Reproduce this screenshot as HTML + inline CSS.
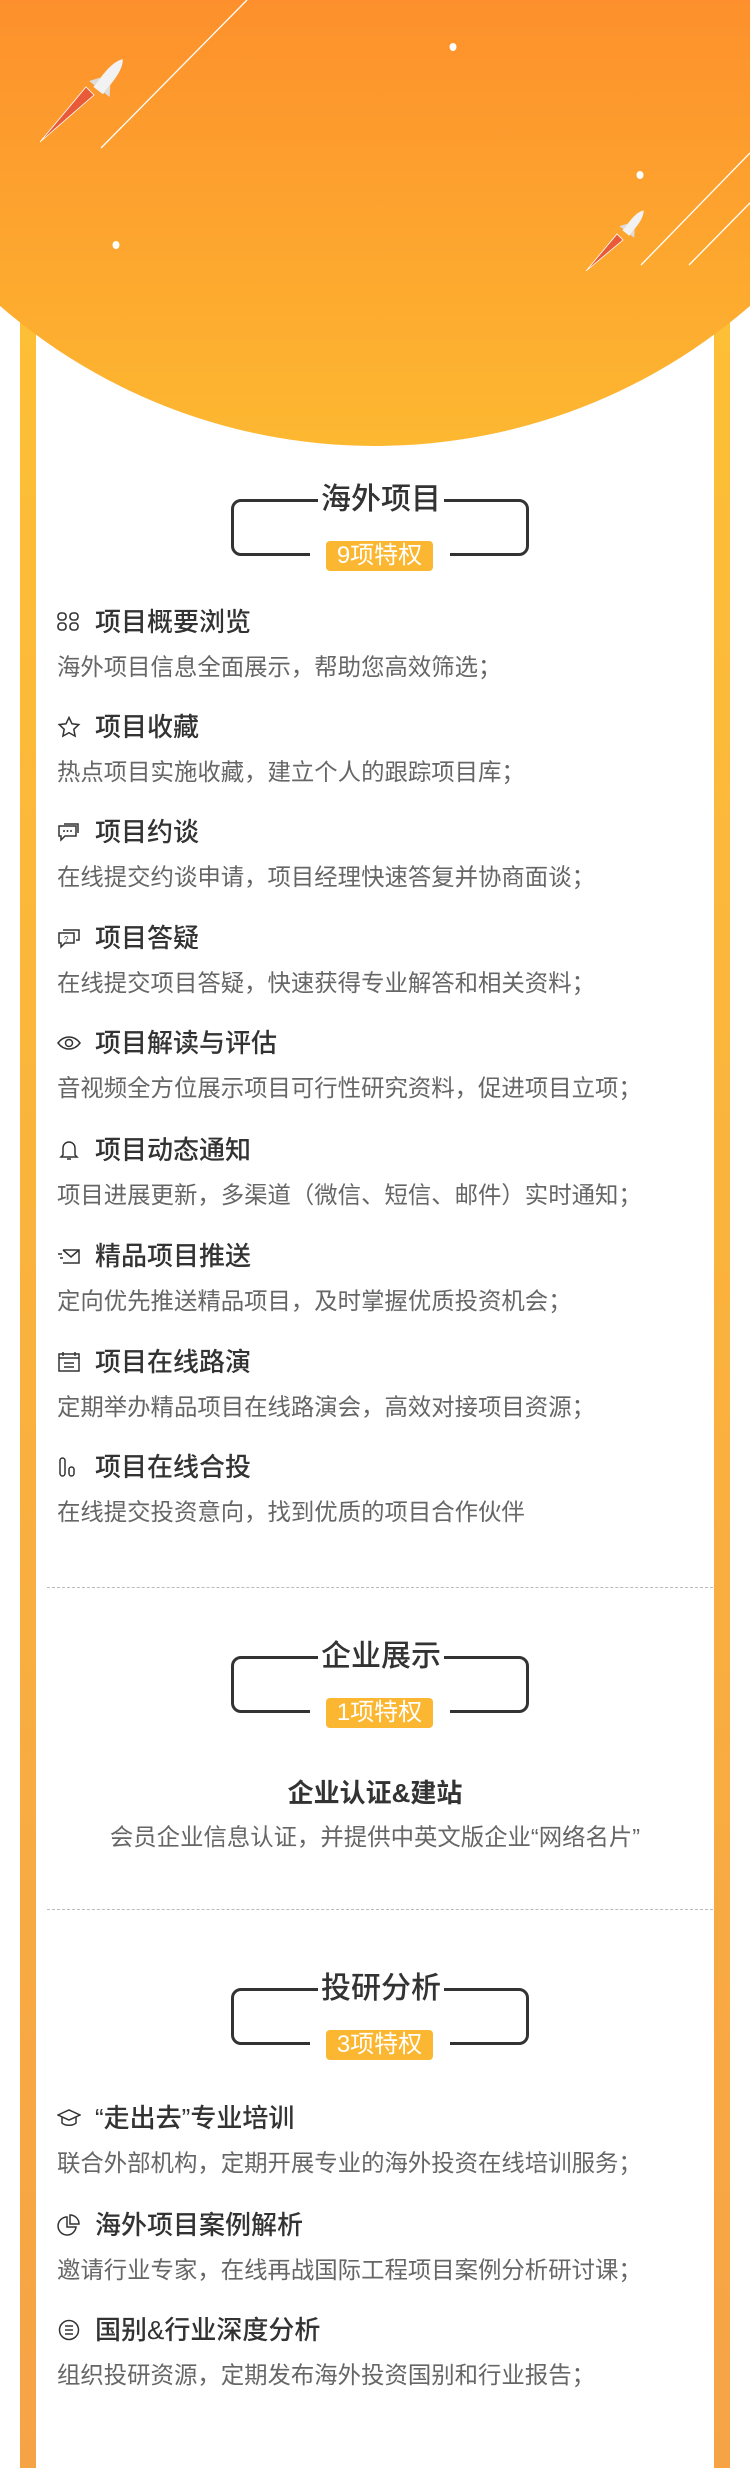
<!DOCTYPE html>
<html><head><meta charset="utf-8"><style>
*{margin:0;padding:0;box-sizing:border-box}
body{width:750px;height:2468px;position:relative;background:#fff;overflow:hidden;font-family:"Liberation Sans","Noto Sans CJK SC",sans-serif}
.bar{position:absolute;top:320px;bottom:0;width:16px;background:linear-gradient(#fdbf36,#f6a346)}
.circle{position:absolute;left:-197px;top:-698px;width:1144px;height:1144px;border-radius:50%;background:linear-gradient(to bottom,#fd8a2b 55%,#fdb831 100%)}
.hd{position:absolute;left:231px;width:298px;height:57px;border:3px solid #333;border-radius:10px}
.hd .t{position:absolute;left:84px;width:126px;top:-22px;height:40px;background:#fff;text-align:center;font-size:30px;font-weight:500;color:#333;line-height:40px}
.hd .bw{position:absolute;left:76px;width:140px;bottom:-18px;height:32px;background:#fff}
.hd .b{position:absolute;left:92px;width:107px;bottom:-18px;height:30px;background:#fbb731;border-radius:4px;color:#fff;font-size:24px;line-height:30px;text-align:center}
.it{position:absolute;left:57px;width:660px}
.it .ti{position:absolute;left:38px;top:-16px;font-size:26px;font-weight:500;color:#333;line-height:32px;white-space:nowrap}
.it svg{position:absolute;left:0;top:-11px;width:24px;height:22px}
.it .d{position:absolute;left:0;top:30px;font-size:23.4px;color:#666;line-height:30px;white-space:nowrap}
.dash{position:absolute;left:47px;width:666px;border-top:1.5px dashed #bbb}
</style></head><body>
<div class="bar" style="left:20px"></div>
<div class="bar" style="left:714px"></div>
<div class="circle"></div>
<svg style="position:absolute;left:0;top:0" width="750" height="460">
<g stroke="#fff" stroke-width="1.3"><line x1="247" y1="0" x2="101" y2="148"/><line x1="750" y1="153" x2="641" y2="265"/><line x1="750" y1="203" x2="689" y2="265"/></g>
<g fill="#fff"><ellipse cx="453" cy="47" rx="3.5" ry="4"/><ellipse cx="640" cy="175" rx="3.5" ry="4"/><ellipse cx="116" cy="245" rx="3.5" ry="4"/></g>
<path d="M40 142 L86 87 L94 95 Z" fill="#e85a38" stroke="#fff" stroke-width="0.8"/>
<g transform="translate(108,78) rotate(38)"><path d="M0 -24 C5 -18 6 -8 6 0 L6 16 L-6 16 L-6 0 C-6 -8 -5 -18 0 -24Z" fill="#f2f2f2"/><path d="M-6 4 L-13 14 L-6 14Z M6 4 L13 14 L6 14Z" fill="#ddd"/></g>
<path d="M586 271 L617 234 L623 240 Z" fill="#e85a38" stroke="#fff" stroke-width="0.8"/>
<g transform="translate(633,224) rotate(38) scale(0.72)"><path d="M0 -24 C5 -18 6 -8 6 0 L6 16 L-6 16 L-6 0 C-6 -8 -5 -18 0 -24Z" fill="#f2f2f2"/><path d="M-6 4 L-13 14 L-6 14Z M6 4 L13 14 L6 14Z" fill="#ddd"/></g>
</svg>

<div class="hd" style="top:499px"><div class="t">海外项目</div><div class="bw"></div><div class="b">9项特权</div></div>

<div class="it" style="top:622px"><svg viewBox="0 0 24 22" fill="none" stroke="#333" stroke-width="1.6"><rect x="1" y="2" width="8" height="7" rx="3"/><rect x="13" y="2" width="8" height="7" rx="3"/><rect x="1" y="12" width="8" height="7" rx="3"/><rect x="13" y="12" width="8" height="7" rx="3"/></svg><div class="ti">项目概要浏览</div><div class="d">海外项目信息全面展示，帮助您高效筛选；</div></div>
<div class="it" style="top:727px"><svg viewBox="0 0 24 22" fill="none" stroke="#333" stroke-width="1.5"><path d="M12 1.5l3 6.3 6.8.8-5 4.7 1.3 6.8L12 16.7 5.9 20.1l1.3-6.8-5-4.7 6.8-.8z"/></svg><div class="ti">项目收藏</div><div class="d">热点项目实施收藏，建立个人的跟踪项目库；</div></div>
<div class="it" style="top:832px"><svg viewBox="0 0 24 22" fill="none" stroke="#333" stroke-width="1.5"><path d="M2 5h17v10H8l-4 4v-4H2z"/><path d="M7 3h14v9"/><g fill="#333" stroke="none"><circle cx="7" cy="10" r="1"/><circle cx="10.5" cy="10" r="1"/><circle cx="14" cy="10" r="1"/></g></svg><div class="ti">项目约谈</div><div class="d">在线提交约谈申请，项目经理快速答复并协商面谈；</div></div>
<div class="it" style="top:938px"><svg viewBox="0 0 24 22" fill="none" stroke="#333" stroke-width="1.5"><path d="M2 6h15v10H8l-4 4v-4H2z"/><path d="M6 3h16v10h-3"/><text x="7" y="15" font-size="8" fill="#333" stroke="none" font-family="Liberation Sans">?</text></svg><div class="ti">项目答疑</div><div class="d">在线提交项目答疑，快速获得专业解答和相关资料；</div></div>
<div class="it" style="top:1043px"><svg viewBox="0 0 24 22" fill="none" stroke="#333" stroke-width="1.5"><path d="M1 11c6-8 16-8 22 0-6 8-16 8-22 0z"/><circle cx="12" cy="11" r="3.5"/></svg><div class="ti">项目解读与评估</div><div class="d">音视频全方位展示项目可行性研究资料，促进项目立项；</div></div>
<div class="it" style="top:1150px"><svg viewBox="0 0 24 22" fill="none" stroke="#333" stroke-width="1.5"><path d="M6 16V9a6 6 0 0 1 12 0v7l2 2H4z"/><path d="M10 20h4"/></svg><div class="ti">项目动态通知</div><div class="d">项目进展更新，多渠道（微信、短信、邮件）实时通知；</div></div>
<div class="it" style="top:1256px"><svg viewBox="0 0 24 22" fill="none" stroke="#333" stroke-width="1.5"><path d="M6 5h16v13H6"/><path d="M6 5l8 7 8-7"/><path d="M1 9h4M3 13h3"/></svg><div class="ti">精品项目推送</div><div class="d">定向优先推送精品项目，及时掌握优质投资机会；</div></div>
<div class="it" style="top:1362px"><svg viewBox="0 0 24 22" fill="none" stroke="#333" stroke-width="1.5"><rect x="2" y="3" width="20" height="17"/><path d="M2 7h20M6 1v4M18 1v4M7 12h10M7 16h10"/></svg><div class="ti">项目在线路演</div><div class="d">定期举办精品项目在线路演会，高效对接项目资源；</div></div>
<div class="it" style="top:1467px"><svg viewBox="0 0 24 22" fill="none" stroke="#333" stroke-width="1.5"><rect x="3" y="2" width="5" height="18" rx="2.5"/><rect x="12" y="11" width="5" height="9" rx="2.5"/></svg><div class="ti">项目在线合投</div><div class="d">在线提交投资意向，找到优质的项目合作伙伴</div></div>

<div class="dash" style="top:1587px"></div>
<div class="hd" style="top:1656px"><div class="t">企业展示</div><div class="bw"></div><div class="b">1项特权</div></div>
<div style="position:absolute;left:0;width:750px;top:1777px;text-align:center;font-size:26px;font-weight:bold;color:#333;line-height:32px">企业认证&amp;建站</div>
<div style="position:absolute;left:0;width:750px;top:1822px;text-align:center;font-size:23.4px;color:#666;line-height:30px">会员企业信息认证，并提供中英文版企业“网络名片”</div>
<div class="dash" style="top:1909px"></div>
<div class="hd" style="top:1988px"><div class="t">投研分析</div><div class="bw"></div><div class="b">3项特权</div></div>

<div class="it" style="top:2118px"><svg viewBox="0 0 24 22" fill="none" stroke="#333" stroke-width="1.5"><path d="M1 8l11-5 11 5-11 5z"/><path d="M5 10v6c3 3 11 3 14 0v-6"/></svg><div class="ti">“走出去”专业培训</div><div class="d">联合外部机构，定期开展专业的海外投资在线培训服务；</div></div>
<div class="it" style="top:2225px"><svg viewBox="0 0 24 22" fill="none" stroke="#333" stroke-width="1.5"><path d="M10 3a9 9 0 1 0 9 10h-9z"/><path d="M13 1v9h9a9 9 0 0 0-9-9z"/></svg><div class="ti">海外项目案例解析</div><div class="d">邀请行业专家，在线再战国际工程项目案例分析研讨课；</div></div>
<div class="it" style="top:2330px"><svg viewBox="0 0 24 22" fill="none" stroke="#333" stroke-width="1.5"><circle cx="12" cy="11" r="9.5"/><path d="M8 7h8M8 11h8M8 15h8"/></svg><div class="ti">国别&amp;行业深度分析</div><div class="d">组织投研资源，定期发布海外投资国别和行业报告；</div></div>
</body></html>
